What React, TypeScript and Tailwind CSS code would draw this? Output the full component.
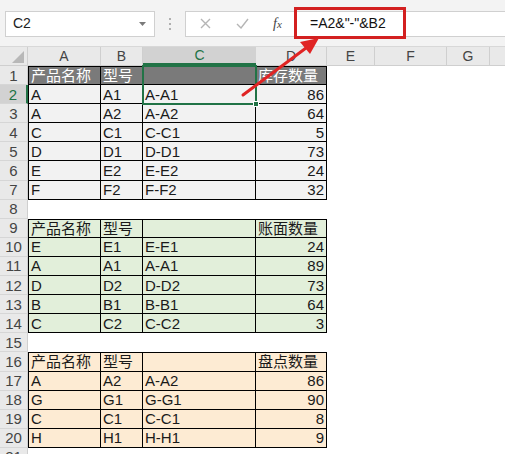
import React from 'react'

type Row = {
  n: number
  cells?: string[]
  kind?: 'head1' | 'body1' | 'head2' | 'body2' | 'head3' | 'body3'
}

const COLS = [
  { key: 'A', w: 'w-[73px]' },
  { key: 'B', w: 'w-[42px]' },
  { key: 'C', w: 'w-[113px]' },
  { key: 'D', w: 'w-[71px]' },
  { key: 'E', w: 'w-[48px]' },
  { key: 'F', w: 'w-[72px]' },
  { key: 'G', w: 'w-[43px]' },
]

const rows: Row[] = [
  { n: 1, kind: 'head1', cells: ['产品名称', '型号', '', '库存数量'] },
  { n: 2, kind: 'body1', cells: ['A', 'A1', 'A-A1', '86'] },
  { n: 3, kind: 'body1', cells: ['A', 'A2', 'A-A2', '64'] },
  { n: 4, kind: 'body1', cells: ['C', 'C1', 'C-C1', '5'] },
  { n: 5, kind: 'body1', cells: ['D', 'D1', 'D-D1', '73'] },
  { n: 6, kind: 'body1', cells: ['E', 'E2', 'E-E2', '24'] },
  { n: 7, kind: 'body1', cells: ['F', 'F2', 'F-F2', '32'] },
  { n: 8 },
  { n: 9, kind: 'head2', cells: ['产品名称', '型号', '', '账面数量'] },
  { n: 10, kind: 'body2', cells: ['E', 'E1', 'E-E1', '24'] },
  { n: 11, kind: 'body2', cells: ['A', 'A1', 'A-A1', '89'] },
  { n: 12, kind: 'body2', cells: ['D', 'D2', 'D-D2', '73'] },
  { n: 13, kind: 'body2', cells: ['B', 'B1', 'B-B1', '64'] },
  { n: 14, kind: 'body2', cells: ['C', 'C2', 'C-C2', '3'] },
  { n: 15 },
  { n: 16, kind: 'head3', cells: ['产品名称', '型号', '', '盘点数量'] },
  { n: 17, kind: 'body3', cells: ['A', 'A2', 'A-A2', '86'] },
  { n: 18, kind: 'body3', cells: ['G', 'G1', 'G-G1', '90'] },
  { n: 19, kind: 'body3', cells: ['C', 'C1', 'C-C1', '8'] },
  { n: 20, kind: 'body3', cells: ['H', 'H1', 'H-H1', '9'] },
  { n: 21 },
]

const bgFor = (kind?: Row['kind']) => {
  switch (kind) {
    case 'head1':
      return 'bg-[#7a7a7a] text-white'
    case 'body1':
      return 'bg-[#f2f2f2] text-[#1a1a1a]'
    case 'head2':
    case 'body2':
      return 'bg-[#e2efda] text-[#1a1a1a]'
    case 'head3':
    case 'body3':
      return 'bg-[#fdebd3] text-[#1a1a1a]'
    default:
      return 'bg-white'
  }
}

const isHead = (kind?: Row['kind']) =>
  kind === 'head1' || kind === 'head2' || kind === 'head3'

function SheetRow({ row }: { row: Row }) {
  const selected = row.n === 2
  return (
    <div className="flex h-[19.1px]">
      <div
        className={`w-[28px] shrink-0 flex items-center justify-center border-b border-[#d6d6d6] text-[15px] leading-none ${
          selected
            ? 'bg-[#d2d2d2] text-[#217346] border-r-2 border-r-[#217346]'
            : 'bg-[#e9e9e9] text-[#444] border-r border-r-[#cfcfcf]'
        }`}
      >
        {row.n}
      </div>
      {COLS.map((col, i) => {
        const inTable = row.cells && i < 4
        const text = inTable ? row.cells![i] : ''
        const border = inTable
          ? `border-r border-b border-black ${i === 0 ? 'border-l' : ''} ${
              isHead(row.kind) ? 'border-t' : ''
            }`
          : ''
        const align = i === 3 && !isHead(row.kind) ? 'justify-end pr-[2px]' : 'pl-[2px]'
        return (
          <div
            key={col.key}
            className={`${col.w} shrink-0 flex items-center overflow-hidden whitespace-nowrap text-[15px] leading-none ${
              inTable ? bgFor(row.kind) : 'bg-white'
            } ${border} ${align}`}
          >
            {text}
          </div>
        )
      })}
      <div className="flex-1 bg-white" />
    </div>
  )
}

export default function App() {
  return (
    <div
      className="relative w-[505px] h-[454px] overflow-hidden bg-white"
      style={{ fontFamily: '"Liberation Sans", "Noto Sans CJK SC", sans-serif' }}
    >
      {/* toolbar */}
      <div className="h-[47px] bg-[#f3f3f3] border-b border-[#d8d8d8] flex items-center pt-[1px]">
        <div className="ml-[5px] w-[150px] h-[26px] bg-white border border-[#d0d0d0] flex items-center justify-between px-[7px]">
          <span className="text-[14px] text-[#222]">C2</span>
          <svg width="9" height="6" viewBox="0 0 9 6">
            <path d="M1 1 L8 1 L4.5 5 Z" fill="#7a7a7a" />
          </svg>
        </div>
        <div className="w-[30px] flex flex-col items-center gap-[3px]">
          <span className="w-[2px] h-[2px] bg-[#b0b0b0]" />
          <span className="w-[2px] h-[2px] bg-[#b0b0b0]" />
          <span className="w-[2px] h-[2px] bg-[#b0b0b0]" />
        </div>
        <div className="flex-1 h-[26px] bg-white border border-[#d0d0d0] border-r-0 flex items-center">
          <svg className="ml-[14px]" width="11" height="11" viewBox="0 0 11 11">
            <path d="M1 1 L10 10 M10 1 L1 10" stroke="#b5b5b5" strokeWidth="1.4" />
          </svg>
          <svg className="ml-[25px]" width="13" height="11" viewBox="0 0 13 11">
            <path d="M1 6 L5 10 L12 1" stroke="#b5b5b5" strokeWidth="1.4" fill="none" />
          </svg>
          <span
            className="ml-[24px] text-[14px] italic text-[#444]"
            style={{ fontFamily: '"Liberation Serif", serif' }}
          >
            f<span className="text-[11px]">x</span>
          </span>
        </div>
      </div>

      {/* column headers */}
      <div className="flex h-[19px] bg-[#e9e9e9] border-b border-[#cfcfcf]">
        <div className="w-[28px] shrink-0 border-r border-[#cfcfcf] flex items-end justify-end pr-[3px] pb-[2px]">
          <svg width="12" height="12" viewBox="0 0 12 12">
            <path d="M12 0 L12 12 L0 12 Z" fill="#b8b8b8" />
          </svg>
        </div>
        {COLS.map((col) => (
          <div
            key={col.key}
            className={`${col.w} shrink-0 flex items-center justify-center text-[14px] leading-none ${
              col.key === 'C'
                ? 'bg-[#d2d2d2] text-[#217346] border-b-2 border-[#217346]'
                : 'text-[#444] border-r border-[#cfcfcf]'
            }`}
          >
            {col.key}
          </div>
        ))}
        <div className="flex-1" />
      </div>

      {/* grid */}
      <div>
        {rows.map((row) => (
          <SheetRow key={row.n} row={row} />
        ))}
      </div>

      {/* formula text inside highlighted box */}
      <div className="absolute left-[294px] top-[7px] w-[112px] h-[32px] border-[3px] border-[#d32020] flex items-center pl-[13px] text-[14px] text-[#111]">
        =A2&amp;"-"&amp;B2
      </div>

      {/* selection C1:C2 */}
      <div className="absolute left-[142px] top-[65px] w-[115px] h-[40px] border-2 border-[#217346]" />
      <div className="absolute left-[253px] top-[101px] w-[6px] h-[6px] bg-[#217346] border border-white" />

      {/* arrow */}
      <svg className="absolute left-0 top-0" width="505" height="454" viewBox="0 0 505 454">
        <line x1="243" y1="95" x2="306" y2="48" stroke="#e02424" strokeWidth="3" strokeLinecap="round" />
        <path d="M319 38 L300 42 L310 54 Z" fill="#e02424" />
      </svg>
    </div>
  )
}
